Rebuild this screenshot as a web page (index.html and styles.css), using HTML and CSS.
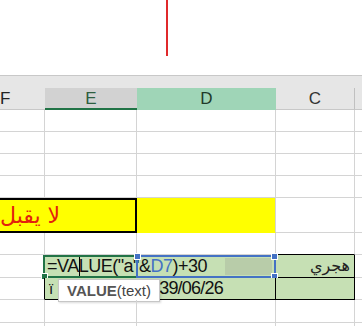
FILE: index.html
```html
<!DOCTYPE html>
<html lang="ar">
<head>
    <meta charset="UTF-8">
    <meta name="viewport" content="width=device-width, initial-scale=1.0">
    <title>Sheet</title>
    <link rel="stylesheet" href="styles.css">
</head>
<body>

<div class="top">
    <div class="marker"></div>
</div>

<div class="strip"></div>

<div class="heads">
    <div class="head f">F</div>
    <div class="head e">E</div>
    <div class="head d">D</div>
    <div class="head c">C</div>
    <div class="head x"></div>
</div>

<div class="row">
    <div class="cell f"></div><div class="cell e"></div><div class="cell d"></div><div class="cell c"></div><div class="cell x"></div>
</div>
<div class="row">
    <div class="cell f"></div><div class="cell e"></div><div class="cell d"></div><div class="cell c"></div><div class="cell x"></div>
</div>
<div class="row">
    <div class="cell f"></div><div class="cell e"></div><div class="cell d"></div><div class="cell c"></div><div class="cell x"></div>
</div>
<div class="row">
    <div class="cell f"></div><div class="cell e"></div><div class="cell d"></div><div class="cell c"></div><div class="cell x"></div>
</div>

<div class="row tall">
    <div class="cell fe note"><span>لا يقبل</span></div>
    <div class="cell d yellow"></div>
    <div class="cell c"></div>
    <div class="cell x"></div>
</div>

<div class="row">
    <div class="cell f"></div><div class="cell e"></div><div class="cell d"></div><div class="cell c edge-b"></div><div class="cell x"></div>
</div>

<div class="row edit-row">
    <div class="cell f"></div>
    <div class="cell ed green">
        <span class="formula">=VA<i class="caret"></i>LUE("a"&amp;<b class="ref">D7</b>)+30</span>
    </div>
    <div class="cell c green boxed"><span class="hijri">هجري</span></div>
    <div class="cell x"></div>

    <div class="sel-box"><i class="knob bl"></i></div>
    <div class="ref-box"><span class="shade"></span><i class="knob tl"></i><i class="knob tr"></i><i class="knob br"></i></div>
</div>

<div class="row date-row">
    <div class="cell f edge-r"></div>
    <div class="cell ed green boxed-b"><span class="mark">ï</span><span class="date">39/06/26</span></div>
    <div class="cell c green boxed-b"></div>
    <div class="cell x"></div>

    <div class="tip"><b>VALUE</b>(text)</div>
</div>

<div class="row short">
    <div class="cell f"></div><div class="cell e"></div><div class="cell d"></div><div class="cell c"></div><div class="cell x"></div>
</div>
<div class="row stub">
    <div class="cell f"></div><div class="cell e"></div><div class="cell d"></div><div class="cell c"></div><div class="cell x"></div>
</div>

</body>
</html>
```

FILE: styles.css
```css
body {
    margin: 0;
    padding: 0;
    width: 362px;
    height: 326px;
    overflow: hidden;
    background: white;
    font-family: "Liberation Sans", Arial, sans-serif;
}
.top {
    height: 75px;
}
.marker {
    margin-left: 166px;
    width: 2px;
    height: 56px;
    background: #e0292b;
}
.strip {
    height: 12px;
    background: #e6e6e6;
    border-top: 1px solid #c8c8c8;
}
.heads {
    display: flex;
    height: 22px;
    background: #e6e6e6;
}
.head {
    box-sizing: border-box;
    height: 22px;
    font-size: 17px;
    line-height: 21px;
    text-align: center;
    color: #333;
    border-bottom: 1px solid #c8c8c8;
}
.head.f {
    text-align: left;
    color: #222;
}
.head.e {
    background: #d2d2d2;
    color: #2e5e40;
    border-bottom: 2px solid #217346;
}
.head.d {
    background: #9fd5b7;
    color: #1f3a2a;
    border-bottom: none;
}
.head.c {
    border-right: 1px solid #c0c0c0;
}
.f { width: 45px; }
.e { width: 92px; }
.d { width: 139px; }
.c { width: 79px; }
.x { flex: 1; }
.fe { width: 137px; }
.ed { width: 231px; }

.row {
    display: flex;
    height: 22px;
    position: relative;
}
.row.tall { height: 35px; }
.row.edit-row { height: 23px; }
.row.short { height: 23px; }
.row.stub { height: 3px; }
.row.stub .cell { border-bottom: none; }

.cell {
    box-sizing: border-box;
    height: 100%;
    border-right: 1px solid #d4d4d4;
    border-bottom: 1px solid #d4d4d4;
}
.cell.x { border-right: none; }

.note {
    background: #ffff00;
    border: 2px solid #000;
    border-left: none;
    display: flex;
    align-items: center;
    justify-content: flex-end;
    padding-right: 80px;
    direction: rtl;
    white-space: nowrap;
    overflow: hidden;
}
.note span {
    font-family: "DejaVu Sans", sans-serif;
    font-size: 22px;
    color: #e3210d;
}
.yellow {
    background: #ffff00;
    border-bottom-color: #ffff00;
}

.green { background: #c6e0b4; }
.edge-b { border-bottom-color: #000; }
.edge-r { border-right-color: #000; }
.boxed {
    border-right-color: #000;
    border-bottom-color: #000;
    border-left: 1px solid #000;
    margin-left: -1px;
    width: 80px;
}
.boxed-b {
    border-right-color: #000;
    border-bottom-color: #000;
}

.formula {
    display: block;
    padding-left: 2px;
    font-size: 18px;
    letter-spacing: -0.5px;
    line-height: 23px;
    color: #111;
    white-space: nowrap;
}
.formula b {
    font-weight: normal;
    color: #4472c4;
}
.caret {
    display: inline-block;
    width: 1px;
    height: 21px;
    background: #000;
    vertical-align: -5px;
    margin-right: -1px;
}
.hijri {
    display: block;
    text-align: right;
    padding-right: 4px;
    font-family: "DejaVu Sans", sans-serif;
    font-size: 16px;
    line-height: 22px;
    color: #222;
}

.sel-box {
    position: absolute;
    left: 43px;
    top: 0;
    width: 95px;
    height: 23px;
    box-sizing: border-box;
    border: 2px solid #217346;
    border-right: none;
}
.ref-box {
    position: absolute;
    left: 136px;
    top: 0;
    width: 140px;
    height: 23px;
    box-sizing: border-box;
    border: 2px solid #4472c4;
    display: flex;
    justify-content: flex-end;
    padding: 1px 2px;
}
.shade {
    width: 47px;
    background: #b8cca9;
}
.knob {
    position: absolute;
    width: 5px;
    height: 5px;
    background: #4472c4;
    border: 1px solid white;
}
.knob.tl { left: -4px; top: -4px; }
.knob.tr { right: -4px; top: -4px; }
.knob.br { right: -4px; bottom: -4px; }
.knob.bl { left: -4px; bottom: -4px; background: #217346; }

.date-row .ed {
    display: flex;
    align-items: center;
    font-size: 18px;
    color: #111;
    white-space: nowrap;
    overflow: hidden;
}
.mark {
    padding-left: 4px;
    font-size: 15px;
}
.date {
    margin-left: 106px;
    letter-spacing: -0.8px;
}
.tip {
    position: absolute;
    left: 58px;
    top: 1px;
    width: 102px;
    height: 23px;
    box-sizing: border-box;
    background: white;
    border: 1px solid #c6c6c6;
    box-shadow: 1px 1px 2px rgba(0, 0, 0, 0.15);
    font-size: 15px;
    line-height: 21px;
    color: #444;
    padding-left: 8px;
    white-space: nowrap;
}
.tip b {
    color: #555;
}
```
